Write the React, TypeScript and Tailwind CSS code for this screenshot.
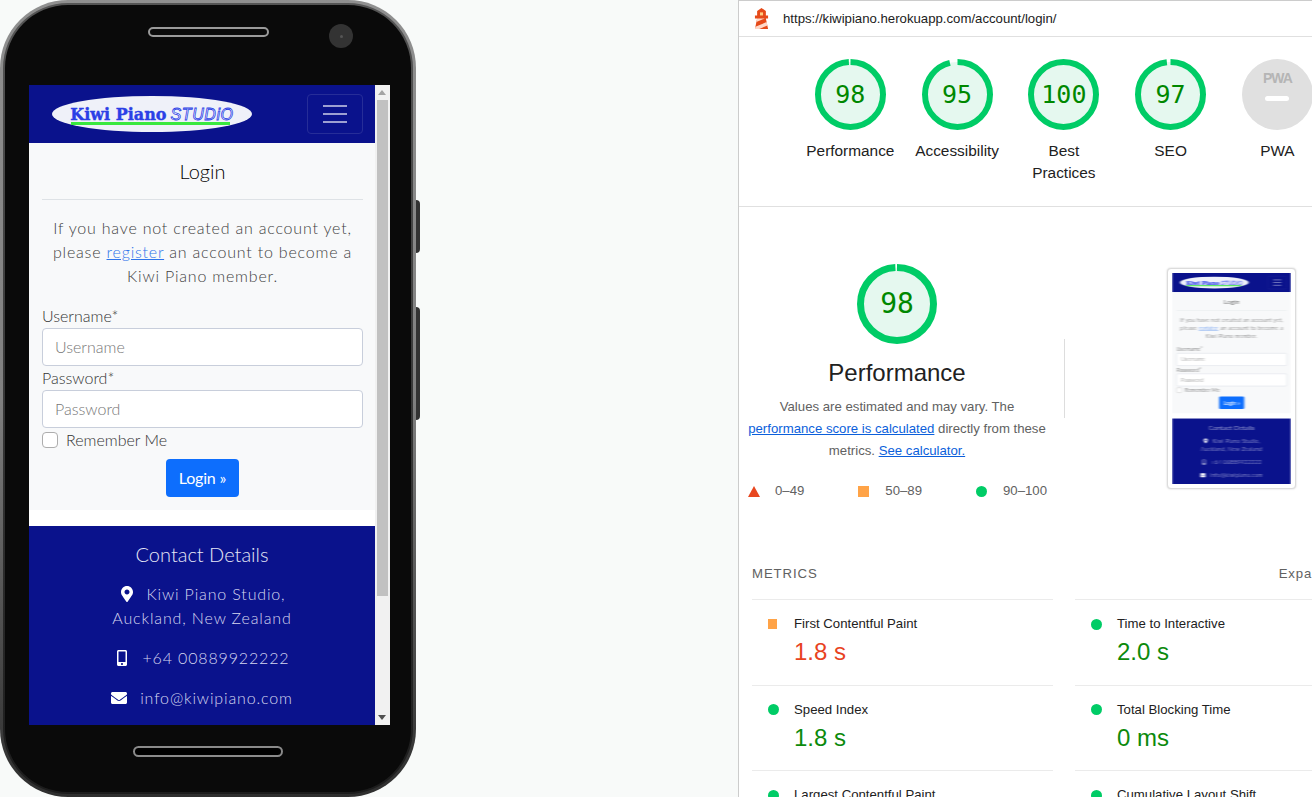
import { FaEnvelope, FaMapMarkerAlt, FaMobileAlt } from "react-icons/fa";

interface GaugeProps {
    score: number;
    size: number;
    stroke: number;
    gap: number;
    textClass: string;
}

interface MetricProps {
    title: string;
    value: string;
    icon: "average" | "pass";
    valueClass: string;
}

const Gauge: React.FC<GaugeProps> = ({ score, size, stroke, gap, textClass }) => {
    const radius = (size - stroke) / 2;
    const circumference = 2 * Math.PI * radius;

    return (
        <div className="relative mx-auto flex items-center justify-center" style={{ width: size, height: size }}>
            <svg width={size} height={size} className="absolute top-0 left-0 -rotate-90">
                <circle cx={size / 2} cy={size / 2} r={radius} fill="#e5f8ef" stroke="none" />
                <circle
                    cx={size / 2}
                    cy={size / 2}
                    r={radius}
                    fill="none"
                    stroke="#00cc66"
                    strokeWidth={stroke}
                    strokeDasharray={`${circumference - gap} ${gap}`}
                />
            </svg>
            <span className={`relative font-['DejaVu_Sans_Mono',monospace] text-[#008800] ${textClass}`}>{score}</span>
        </div>
    );
};

const ScoreColumn: React.FC<{ label: string; score: number; gap: number }> = ({ label, score, gap }) => {
    return (
        <div className="w-[106.75px] shrink-0 text-center">
            <Gauge score={score} size={71} stroke={6} gap={gap} textClass="text-[25px]" />
            <div className="mt-[10px] px-[8px] text-[15.4px] leading-[22px] text-[#212121]">{label}</div>
        </div>
    );
};

const Metric: React.FC<MetricProps> = ({ title, value, icon, valueClass }) => {
    return (
        <div className="h-[85.6px] border-t border-[#ebebeb] pt-[14px] pl-[16px]">
            <div className="flex items-center">
                {icon === "average" ? (
                    <div className="h-[10px] w-[9px] bg-[#ffa347]" />
                ) : (
                    <div className="h-[11px] w-[11px] rounded-full bg-[#00cc66]" />
                )}
                <span className={`text-[13.2px] leading-[20px] text-[#212121] ${icon === "average" ? "ml-[17px]" : "ml-[15px]"}`}>{title}</span>
            </div>
            <div className={`mt-[2px] ml-[26px] text-[24px] leading-[32px] ${valueClass}`}>{value}</div>
        </div>
    );
};

const LoginScreen = () => {
    return (
        <div className="h-[640px] w-[346px] overflow-hidden bg-white font-['Lato',sans-serif] font-light">
            <div className="flex h-[58px] items-center justify-between bg-[#0a128c] pr-[12px] pl-[23px]">
                <div className="flex h-[36px] w-[200px] flex-col items-center justify-center rounded-[50%] bg-[#eff1f9]">
                    <div className="flex items-baseline gap-[4px] pt-[2px] leading-[18px]">
                        <span className="font-['DejaVu_Serif',serif] text-[16px] font-bold text-[#2b3fe6] [-webkit-text-stroke:0.4px_#2b3fe6]">Kiwi Piano</span>
                        <span className="font-['Liberation_Sans',sans-serif] text-[16px] font-normal tracking-[0.6px] text-white italic [-webkit-text-stroke:0.8px_#2b3fe6]">STUDiO</span>
                    </div>
                    <div className="mr-[3px] -mt-[2px] h-[3px] w-[159px] bg-[#39e83f]" />
                </div>
                <div className="flex h-[40px] w-[56px] flex-col items-center justify-center gap-[6px] rounded border border-[#262d98]">
                    <div className="h-[2px] w-[24px] bg-[#9da0d2]" />
                    <div className="h-[2px] w-[24px] bg-[#9da0d2]" />
                    <div className="h-[2px] w-[24px] bg-[#9da0d2]" />
                </div>
            </div>
            <div className="h-[367px] bg-[#f8f9fa] pr-[12px] pl-[13px]">
                <h5 className="pt-[16px] text-center text-[20px] leading-[24px] text-black">Login</h5>
                <hr className="mt-[16px] border-[#dee2e6]" />
                <p className="mt-[16px] text-center text-[16px] leading-[24px] tracking-[0.8px] text-[#3f3f3f]">
                    If you have not created an account yet, please <span className="text-[#2f74ea] underline">register</span> an account to become a Kiwi Piano member.
                </p>
                <div className="mt-[16px] text-[16px] leading-[24px] text-[#333]">Username*</div>
                <input readOnly placeholder="Username" className="block h-[38px] w-full rounded border border-[#c8cedb] bg-white px-[12px] pb-[2px] text-[16px] placeholder:text-[#777]" />
                <div className="text-[16px] leading-[24px] text-[#333]">Password*</div>
                <input readOnly placeholder="Password" className="block h-[38px] w-full rounded border border-[#c8cedb] bg-white px-[12px] pb-[2px] text-[16px] placeholder:text-[#777]" />
                <div className="flex h-[24px] items-center gap-[8px] text-[16px] text-[#333]">
                    <div className="h-[16px] w-[16px] rounded border border-[#adadad] bg-white" />
                    <span>Remember Me</span>
                </div>
                <div className="mt-[7px] flex justify-center">
                    <button className="h-[38px] w-[73px] rounded bg-[#0d6efd] text-[16px] font-normal tracking-[-0.2px] text-white">Login »</button>
                </div>
            </div>
            <div className="mt-[16px] h-[199px] bg-[#0a128c] pt-[15px] text-center text-[16px] leading-[24px] tracking-[0.85px] text-[#d6d7f0]">
                <h5 className="text-[20px] leading-[26px] tracking-[0px] text-[#e6e7f6]">Contact Details</h5>
                <div className="mt-[15px] flex items-center justify-center gap-[12px]">
                    <FaMapMarkerAlt className="text-white" size={16} />
                    <span>Kiwi Piano Studio,</span>
                </div>
                <div>Auckland, New Zealand</div>
                <div className="mt-[16px] flex items-center justify-center gap-[12px]">
                    <FaMobileAlt className="text-white" size={16} />
                    <span>+64 00889922222</span>
                </div>
                <div className="mt-[16px] flex items-center justify-center gap-[13px]">
                    <FaEnvelope className="text-white" size={16} />
                    <span>info@kiwipiano.com</span>
                </div>
            </div>
        </div>
    );
};

const Phone = () => {
    return (
        <div className="relative h-[797px] w-[416px] rounded-[68px] bg-gradient-to-b from-[#909090] via-[#808080] to-[#2e2e2e] p-[3px]">
            <div className="absolute top-[200px] left-[416px] h-[53px] w-[4px] rounded-r-sm bg-[#333]" />
            <div className="absolute top-[307px] left-[416px] h-[113px] w-[4px] rounded-r-sm bg-[#333]" />
            <div className="h-[791px] w-[410px] rounded-[65px] bg-gradient-to-b from-[#555] to-[#1c1c1c] p-[2px]">
                <div className="relative h-[787px] w-[406px] rounded-[63px] bg-[#0a0a0a] pt-[22px]">
                    <div className="absolute top-[19px] left-[324px] flex h-[24px] w-[24px] items-center justify-center rounded-full bg-[#333]">
                        <div className="h-[3px] w-[3px] rounded-full bg-[#555]" />
                    </div>
                    <div className="ml-[143px] h-[10px] w-[121px] rounded-full border-2 border-[#9a9a9a] bg-[#0a0a0a]" />
                    <div className="mt-[48px] ml-[24px] flex h-[640px] w-[361px]">
                        <LoginScreen />
                        <div className="relative w-[15px] bg-[#f1f1f1] pt-[15px]">
                            <div className="absolute top-[5px] left-[3px] h-0 w-0 border-x-[4px] border-b-[5px] border-x-transparent border-b-[#a3a3a3]" />
                            <div className="ml-[2px] h-[496px] w-[11px] bg-[#c1c1c1]" />
                            <div className="absolute bottom-[5px] left-[3px] h-0 w-0 border-x-[4px] border-t-[5px] border-x-transparent border-t-[#505050]" />
                        </div>
                    </div>
                    <div className="mt-[21px] ml-[128px] h-[11px] w-[150px] rounded-full border-2 border-[#8a8a8a] bg-black" />
                </div>
            </div>
        </div>
    );
};

const ReportPanel = () => {
    return (
        <div className="h-[797px] flex-1 overflow-hidden border-t border-l border-[#cccccc] bg-white font-['Liberation_Sans',Arial,sans-serif]">
            <div className="flex h-[36px] items-center border-b border-[#e0e0e0] pl-[12px]">
                <svg width="21" height="21" viewBox="0 0 48 48">
                    <path d="m14 7 10-7 10 7v10h5v7h-5l5 24H9l5-24H9v-7h5V7Z" fill="#e64a19" />
                    <path d="M31.561 24H14l-1.689 8.105L31.561 24ZM18.983 48H9l1.022-4.907L35.723 32.27l1.663 7.98L18.983 48Z" fill="#ffd8c8" />
                    <path d="M20.5 10h7v7h-7z" fill="#ffcc80" />
                </svg>
                <span className="ml-[11px] text-[13.2px] text-[#212121]">https://kiwipiano.herokuapp.com/account/login/</span>
            </div>
            <div className="flex h-[170px] border-b border-[#e0e0e0] pt-[22px] pl-[58px]">
                <ScoreColumn label="Performance" score={98} gap={2} />
                <ScoreColumn label="Accessibility" score={95} gap={8} />
                <ScoreColumn label="Best Practices" score={100} gap={0} />
                <ScoreColumn label="SEO" score={97} gap={4} />
                <div className="w-[106.75px] shrink-0 text-center">
                    <div className="mx-auto flex h-[71px] w-[71px] flex-col items-center rounded-full bg-[#e0e0e0] pt-[12px]">
                        <span className="text-[14px] leading-[14px] font-bold tracking-[-1px] text-[#b5b5b5]">PWA</span>
                        <div className="mt-[11px] h-[5px] w-[24px] rounded-sm bg-white" />
                    </div>
                    <div className="mt-[10px] text-[15.4px] leading-[22px] text-[#212121]">PWA</div>
                </div>
            </div>
            <div className="flex pt-[57px]">
                <div className="w-[316px] shrink-0 px-[9px] text-center">
                    <Gauge score={98} size={80} stroke={7} gap={2} textClass="text-[28px]" />
                    <div className="mt-[14px] text-[24px] leading-[30px] text-[#212121]">Performance</div>
                    <p className="mt-[8px] text-[13.2px] leading-[22px] text-[#616161]">
                        Values are estimated and may vary. The <span className="text-[#0b5fdb] underline">performance score is calculated</span> directly from these metrics. <span className="text-[#0b5fdb] underline">See calculator.</span>
                    </p>
                    <div className="mt-[19px] -mr-[1px] flex justify-between text-[13.2px] leading-[20px] text-[#616161]">
                        <div className="flex items-center gap-[15px]">
                            <div className="h-0 w-0 border-x-[6px] border-b-[11px] border-x-transparent border-b-[#e8471f]" />
                            <span>0–49</span>
                        </div>
                        <div className="flex items-center gap-[16px]">
                            <div className="h-[11px] w-[11px] bg-[#ffa347]" />
                            <span>50–89</span>
                        </div>
                        <div className="flex items-center gap-[16px]">
                            <div className="h-[11px] w-[11px] rounded-full bg-[#00cc66]" />
                            <span>90–100</span>
                        </div>
                    </div>
                </div>
                <div className="mt-[75px] ml-[9px] h-[79px] w-px bg-[#dddddd]" />
                <div className="mt-[4px] ml-[102px] h-[221px] w-[129px] shrink-0 rounded-sm border border-[#dcdcdc] bg-white p-[4px] shadow-[0_0_2px_#cccccc]">
                    <div className="h-[211px] w-[119px] overflow-hidden">
                        <div className="h-[640px] w-[346px] origin-top-left blur-[2.4px] [transform:scale(0.344,0.33)]">
                            <LoginScreen />
                        </div>
                    </div>
                </div>
            </div>
            <div className="mt-[63px] flex items-center pl-[13px] text-[13.2px] leading-[20px] tracking-[0.9px] whitespace-nowrap text-[#616161]">
                <span>METRICS</span>
                <span className="ml-[461px]">Expand view</span>
            </div>
            <div className="mt-[15px] ml-[13px] grid w-[700px] grid-cols-[301px_301px] gap-x-[22px]">
                <Metric title="First Contentful Paint" value="1.8 s" icon="average" valueClass="text-[#e8431f]" />
                <Metric title="Time to Interactive" value="2.0 s" icon="pass" valueClass="text-[#0c8a0c]" />
                <Metric title="Speed Index" value="1.8 s" icon="pass" valueClass="text-[#0c8a0c]" />
                <Metric title="Total Blocking Time" value="0 ms" icon="pass" valueClass="text-[#0c8a0c]" />
                <Metric title="Largest Contentful Paint" value="1.2 s" icon="pass" valueClass="text-[#0c8a0c]" />
                <Metric title="Cumulative Layout Shift" value="0" icon="pass" valueClass="text-[#0c8a0c]" />
            </div>
        </div>
    );
};

export default function App() {
    return (
        <div className="flex h-[797px] w-[1312px] overflow-hidden bg-[#f8faf9]">
            <div className="w-[738px] shrink-0">
                <Phone />
            </div>
            <ReportPanel />
        </div>
    );
}
